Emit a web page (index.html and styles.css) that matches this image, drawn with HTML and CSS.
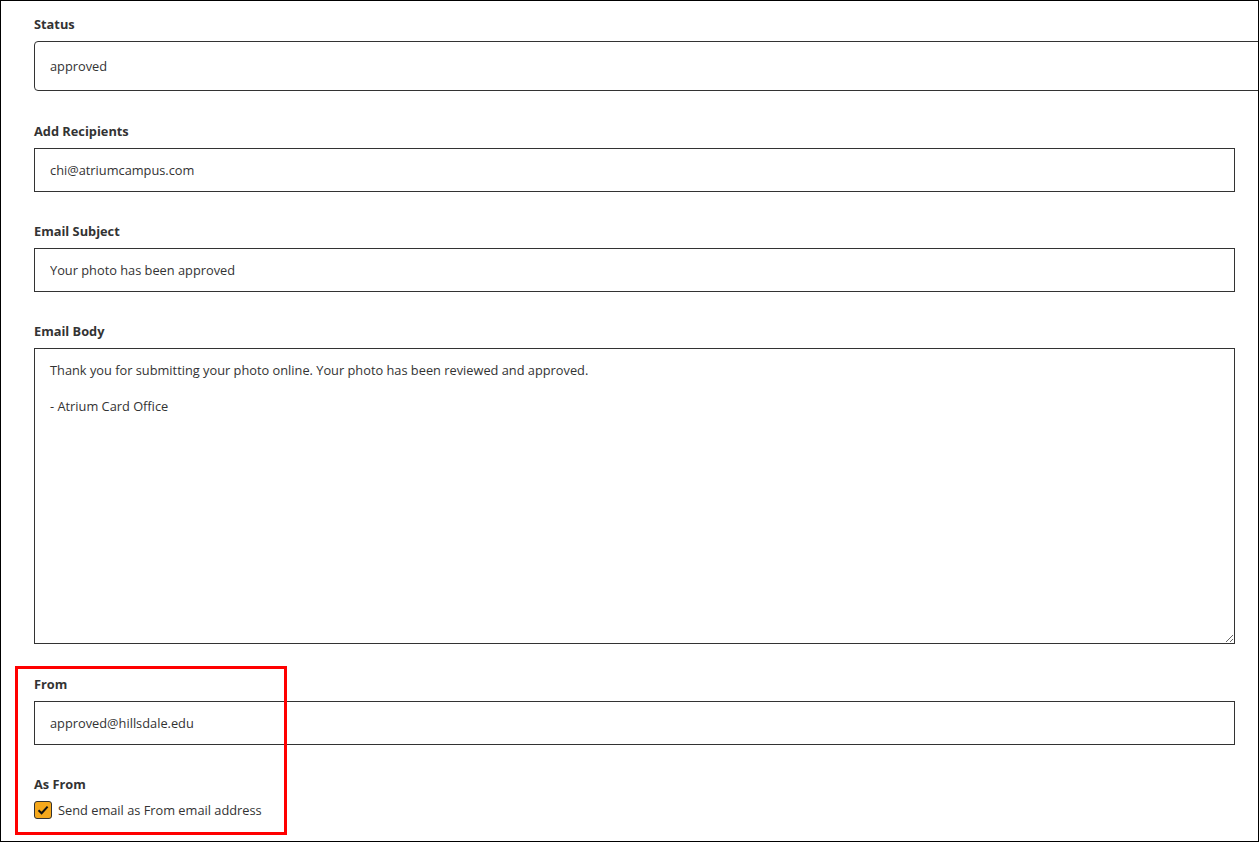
FILE: index.html
```html
<!DOCTYPE html>
<html lang="en">
<head>
    <meta charset="UTF-8">
    <meta name="viewport" content="width=device-width, initial-scale=1.0">
    <title>Email Notification</title>
    <link rel="stylesheet" href="styles.css">
</head>
<body>
    <div class="frame">
        <form class="email-form">
            <div class="form-group wide-gap">
                <label for="status">Status</label>
                <input type="text" id="status" class="status-field" value="approved">
            </div>

            <div class="form-group">
                <label for="recipients">Add Recipients</label>
                <input type="text" id="recipients" value="chi@atriumcampus.com">
            </div>

            <div class="form-group">
                <label for="subject">Email Subject</label>
                <input type="text" id="subject" value="Your photo has been approved">
            </div>

            <div class="form-group wide-gap">
                <label for="body">Email Body</label>
                <textarea id="body">Thank you for submitting your photo online. Your photo has been reviewed and approved.

- Atrium Card Office</textarea>
            </div>

            <div class="form-group">
                <label for="from">From</label>
                <input type="text" id="from" value="approved@hillsdale.edu">
            </div>

            <div class="form-group last">
                <span class="label">As From</span>
                <label class="check">
                    <span class="check-box">
                        <svg width="14" height="14" viewBox="0 0 14 14"><path d="M2.5 7.2 L5.6 10.2 L11.6 3.6" fill="none" stroke="#111" stroke-width="2"/></svg>
                    </span>
                    Send email as From email address
                </label>
            </div>
        </form>

        <div class="highlight"></div>
    </div>
</body>
</html>
```

FILE: styles.css
```css
* {
    box-sizing: border-box;
}

body {
    margin: 0;
    background: #fff;
    font-family: 'Open Sans', sans-serif;
    font-size: 12.8px;
    color: #333;
}

.frame {
    position: relative;
    width: 1259px;
    height: 842px;
    border: 1px solid #000;
    overflow: hidden;
}

.email-form {
    padding: 14px 23px 0 33px;
}

.form-group {
    display: flex;
    flex-direction: column;
    margin-bottom: 30px;
}

.form-group.wide-gap {
    margin-bottom: 31px;
}

.form-group label,
.form-group .label {
    font-weight: bold;
    line-height: 18px;
    margin-bottom: 8px;
    color: #333;
}

input,
textarea {
    font-family: 'Open Sans', sans-serif;
    font-size: 12.8px;
    color: #333;
    border: 1px solid #333;
    border-radius: 0;
    background: #fff;
    padding: 0 15px;
    outline: none;
}

input {
    height: 44px;
    width: 100%;
}

.status-field {
    height: 50px;
    width: 1260px;
    border-radius: 4px;
}

textarea {
    height: 296px;
    width: 100%;
    line-height: 18px;
    padding: 12px 15px;
}

.form-group .check {
    display: flex;
    align-items: center;
    font-weight: normal;
    margin: 0;
}

.check-box {
    display: flex;
    align-items: center;
    justify-content: center;
    width: 18px;
    height: 18px;
    margin-right: 6px;
    background: #f5a81c;
    border: 1px solid #333;
    border-radius: 3px;
}

.highlight {
    position: absolute;
    left: 14px;
    top: 665px;
    width: 272px;
    height: 169px;
    border: 3px solid #f00;
}
```
